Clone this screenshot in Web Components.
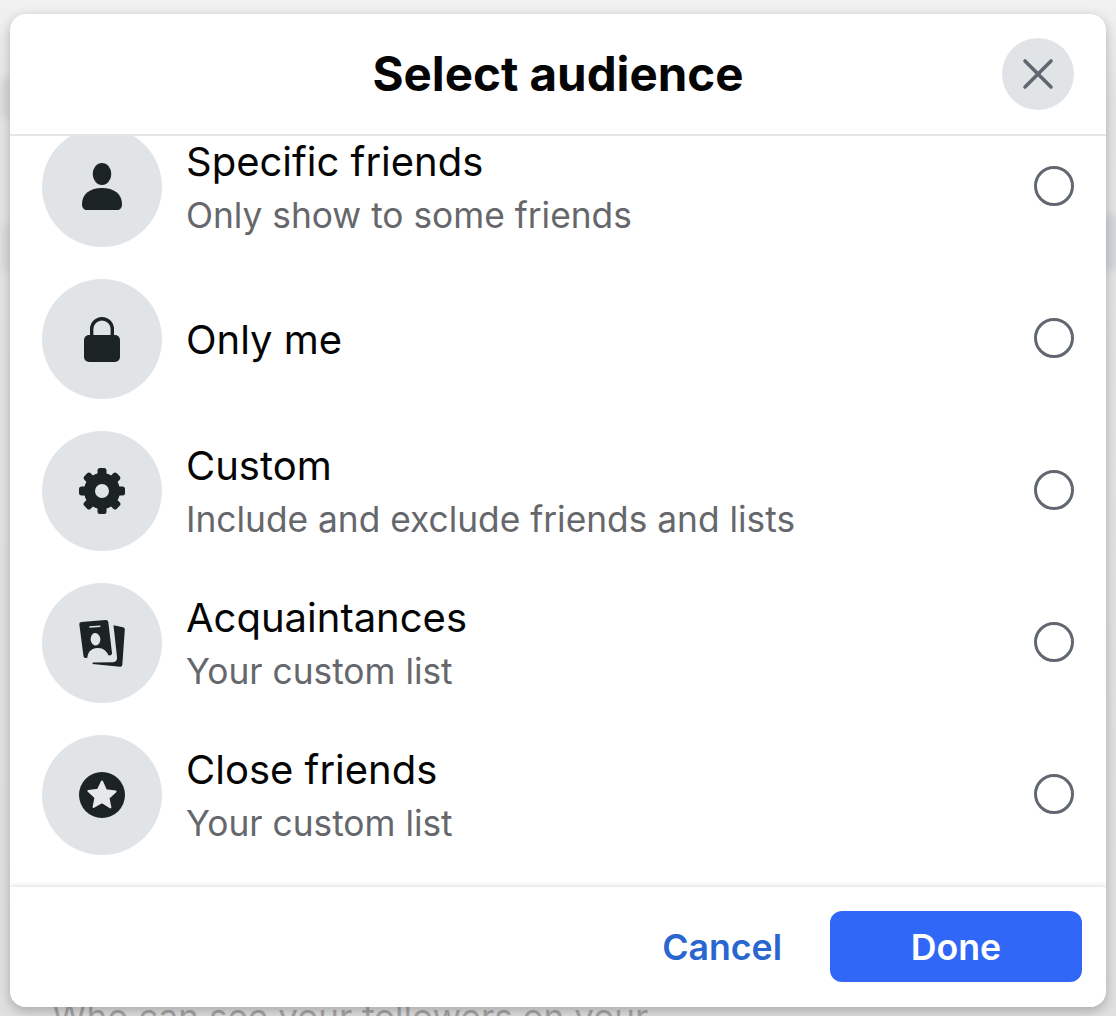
<!DOCTYPE html>
<html>
<head>
<meta charset="utf-8">
<title>Select audience</title>
<style>
	html, body { margin: 0; padding: 0; background: #e8e8e8; }
	body { font-family: Inter, "Liberation Sans", sans-serif; }
</style>
</head>
<body>
<audience-page>
	<span slot="behind">Who can see your followers on your</span>
	<audience-dialog heading="Select audience">
		<audience-row sub="Only show to some friends">
			Specific friends
			<svg slot="icon" width="60" height="60" viewBox="0 0 60 60"><ellipse cx="30" cy="17" rx="9.3" ry="11"/><path d="M10 47c0-10 8-16 20-16s20 6 20 16c0 4-2 6-5 6H15c-3 0-5-2-5-6z"/></svg>
		</audience-row>
		<audience-row>
			Only me
			<svg slot="icon" width="60" height="60" viewBox="0 0 60 60"><path d="M19.700 28V20a10.300 10.300 0 0 1 20.600 0V28" fill="none" stroke="#1c2324" stroke-width="3.400"/><rect x="12" y="26" width="36" height="27" rx="5"/></svg>
		</audience-row>
		<audience-row sub="Include and exclude friends and lists">
			Custom
			<svg slot="icon" width="60" height="60" viewBox="0 0 60 60"><g transform="translate(0 1)"><circle cx="30" cy="29" r="12.500" fill="none" stroke="#1c2324" stroke-width="11"/><rect x="25.500" y="6" width="9" height="12" rx="2.500"/><rect x="25.500" y="6" width="9" height="12" rx="2.500" transform="rotate(45 30 29)"/><rect x="25.500" y="6" width="9" height="12" rx="2.500" transform="rotate(90 30 29)"/><rect x="25.500" y="6" width="9" height="12" rx="2.500" transform="rotate(135 30 29)"/><rect x="25.500" y="6" width="9" height="12" rx="2.500" transform="rotate(180 30 29)"/><rect x="25.500" y="6" width="9" height="12" rx="2.500" transform="rotate(225 30 29)"/><rect x="25.500" y="6" width="9" height="12" rx="2.500" transform="rotate(270 30 29)"/><rect x="25.500" y="6" width="9" height="12" rx="2.500" transform="rotate(315 30 29)"/></g></svg>
		</audience-row>
		<audience-row sub="Your custom list">
			Acquaintances
			<svg slot="icon" width="60" height="60" viewBox="0 0 60 60"><path d="M9.300 9L33.500 7Q36 6.800 36.300 9L40 40Q40.300 42 38.500 42.300L13.500 45Q11.800 45.200 11.500 43.300L7.300 11.300Q7 9.200 9.300 9z"/><path d="M17.300 13.300l11-.9.150 1.500-11 .9z" fill="#e1e4e7"/><ellipse cx="23.500" cy="26.300" rx="4.900" ry="6.200" fill="#e1e4e7" transform="rotate(-5 23.500 26.300)"/><path d="M15.500 48C14.500 40 18.500 35.300 25.500 35C31 34.700 35.500 38 37.500 45z" fill="#e1e4e7"/><path d="M41.500 12.300L51 14.300Q53 14.700 52.800 16.700L50.300 52Q50.100 54 48 53.800L20.500 51L20.800 49.500L41 49.300Q45.500 49 45 44z"/></svg>
		</audience-row>
		<audience-row sub="Your custom list">
			Close friends
			<svg slot="icon" width="60" height="60" viewBox="0 0 60 60"><circle cx="30" cy="30" r="23"/><path d="M30 16.500l4 8.800 9.600 1.100-7.100 6.500 1.900 9.500L30 37.100l-8.400 4.800 1.900-9.500-7.100-6.500 9.600-1.100z" fill="#e6e8eb" stroke="#e6e8eb" stroke-width="2" stroke-linejoin="round"/></svg>
		</audience-row>
		<audience-button slot="footer" kind="link">Cancel</audience-button>
		<audience-button slot="footer" kind="primary">Done</audience-button>
	</audience-dialog>
</audience-page>

<script>
// Backdrop behind the dialog, blurred page shapes included
class AudiencePage extends HTMLElement {
	constructor() {
		super();
		this.attachShadow({ mode: 'open' });
		this.shadowRoot.innerHTML = `
			<style>
				:host {
					display: block;
					position: relative;
					width: 1116px;
					height: 1016px;
					overflow: hidden;
					background: #f0f0f0;
					padding: 14px 10px 9px;
					box-sizing: border-box;
				}
				.scrim {
					position: absolute;
					inset: 0;
					background: linear-gradient(#f1f1f1 0, #e6e6e6 10%, #e0e0e0 100%);
				}
				.blot {
					position: absolute;
					filter: blur(3px);
				}
				.behind {
					position: absolute;
					left: 52px;
					top: 996px;
					font-size: 35.100px;
					line-height: 40px;
					white-space: nowrap;
					color: #a6a6a6;
				}
				.frame {
					position: relative;
					height: 100%;
				}
			</style>
			<div class="scrim"></div>
			<div class="blot" style="left:0;top:78px;width:12px;height:40px;background:#dadada"></div>
			<div class="blot" style="left:0;top:225px;width:12px;height:45px;background:#dbdbdb"></div>
			<div class="blot" style="left:1104px;top:215px;width:14px;height:55px;background:#d3d6dc"></div>
			<div class="behind"><slot name="behind"></slot></div>
			<div class="frame"><slot></slot></div>
		`;
	}
}

class AudienceDialog extends HTMLElement {
	constructor() {
		super();
		this.attachShadow({ mode: 'open' });
		this.shadowRoot.innerHTML = `
			<style>
				:host {
					display: flex;
					flex-direction: column;
					height: 100%;
					background: #fff;
					border-radius: 16px;
					overflow: hidden;
					box-shadow: 0 4px 12px rgba(0,0,0,0.25);
				}
				header {
					position: relative;
					flex: none;
					height: 120px;
					display: flex;
					align-items: center;
					justify-content: center;
					border-bottom: 2px solid #e5e6e8;
				}
				h1 {
					margin: -2px 0 0;
					font-size: 47.500px;
					font-weight: 700;
					color: #050505;
				}
				.button-close {
					position: absolute;
					right: 32px;
					top: 24px;
					width: 72px;
					height: 72px;
					border: 0;
					padding: 0;
					border-radius: 50%;
					background: #e1e4e7;
					display: flex;
					align-items: center;
					justify-content: center;
				}
				.list {
					flex: 1;
					overflow: hidden;
					min-height: 0;
				}
				.rows {
					margin-top: -25px;
				}
				footer {
					flex: none;
					display: flex;
					justify-content: flex-end;
					align-items: center;
					height: 120px;
					padding: 0 24px 2px;
					box-sizing: border-box;
					gap: 48px;
					box-shadow: 0 -2px 4px rgba(0,0,0,0.1);
					position: relative;
					background: #fff;
				}
			</style>
			<header>
				<h1></h1>
				<button class="button-close" aria-label="Close">
					<svg width="32" height="32" viewBox="0 0 32 32"><path d="M3 3l26 26M29 3L3 29" stroke="#606770" stroke-width="3.600" stroke-linecap="round"/></svg>
				</button>
			</header>
			<div class="list"><div class="rows"><slot></slot></div></div>
			<footer><slot name="footer"></slot></footer>
		`;
	}

	connectedCallback() {
		this.shadowRoot.querySelector('h1').textContent = this.getAttribute('heading');
	}
}

class AudienceRow extends HTMLElement {
	constructor() {
		super();
		this.attachShadow({ mode: 'open' });
		this.shadowRoot.innerHTML = `
			<style>
				:host {
					display: flex;
					align-items: center;
					height: 152px;
					box-sizing: border-box;
					padding: 16px 32px;
				}
				.icon {
					flex: none;
					width: 120px;
					height: 120px;
					border-radius: 50%;
					background: #e1e4e7;
					display: flex;
					align-items: center;
					justify-content: center;
					fill: #1c2324;
				}
				.text {
					flex: 1;
					margin-left: 24px;
					padding-top: 2px;
					min-width: 0;
				}
				.title {
					font-size: 40px;
					line-height: 56px;
					color: #050505;
				}
				.sub {
					font-size: 35.300px;
					line-height: 52px;
					color: #65676b;
				}
				.radio {
					flex: none;
					width: 40px;
					height: 40px;
					margin-bottom: 2px;
					box-sizing: border-box;
					border: 3px solid #606770;
					border-radius: 50%;
				}
			</style>
			<div class="icon"><slot name="icon"></slot></div>
			<div class="text">
				<div class="title"><slot></slot></div>
				<div class="sub"></div>
			</div>
			<div class="radio"></div>
		`;
	}

	connectedCallback() {
		const sub = this.shadowRoot.querySelector('.sub');
		if (this.hasAttribute('sub')) {
			sub.textContent = this.getAttribute('sub');
		} else {
			sub.remove();
		}
	}
}

class AudienceButton extends HTMLElement {
	constructor() {
		super();
		this.attachShadow({ mode: 'open' });
		this.shadowRoot.innerHTML = `
			<style>
				:host {
					display: flex;
					align-items: center;
					justify-content: center;
					height: 71px;
					box-sizing: border-box;
					padding-top: 2px;
					font-size: 35.700px;
					font-weight: 600;
					border-radius: 12px;
				}
				:host([kind="link"]) { color: #2a66cf; }
				:host([kind="primary"]) {
					width: 252px;
					background: #3067f6;
					color: #fff;
				}
			</style>
			<slot></slot>
		`;
	}
}

customElements.define('audience-page', AudiencePage);
customElements.define('audience-dialog', AudienceDialog);
customElements.define('audience-row', AudienceRow);
customElements.define('audience-button', AudienceButton);
</script>
</body>
</html>
